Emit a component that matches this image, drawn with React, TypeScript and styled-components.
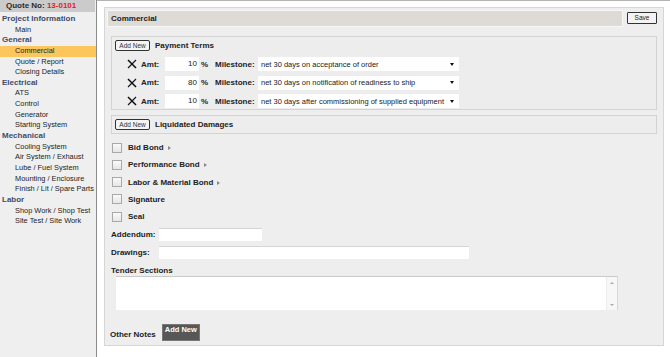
import React from 'react';
import styled, { createGlobalStyle } from 'styled-components';

const GlobalStyle = createGlobalStyle`
  html, body {
    margin: 0;
    padding: 0;
    background: #fff;
    font-family: "Liberation Sans", Arial, sans-serif;
  }
`;

const Page = styled.div`
  display: flex;
  width: 670px;
  height: 357px;
  overflow: hidden;
`;

// SIDEBAR
const Sidebar = styled.nav`
  width: 96px;
  flex: none;
  background: #efefef;
  border-right: 1px solid #8c8c8c;
`;

const QuoteHead = styled.div`
  height: 12px;
  width: 95px;
  background: #cbcbcb;
  font-size: 8px;
  font-weight: bold;
  line-height: 12px;
  color: #2a2a2a;
  padding-left: 6px;
  box-sizing: border-box;
  margin-bottom: 2px;
  span {
    color: #e3201e;
  }
`;

const NavGroup = styled.div`
  height: 10.65px;
  line-height: 10.65px;
  padding-left: 2px;
  font-size: 8px;
  font-weight: bold;
  color: #3f4c69;
  white-space: nowrap;
`;

const NavItem = styled.div<{ $active?: boolean }>`
  height: 10.65px;
  line-height: 10.65px;
  padding-left: 15px;
  font-size: 7.4px;
  color: #232323;
  white-space: nowrap;
  background: ${(p) => (p.$active ? '#fdc65d' : 'transparent')};
`;

// MAIN
const Main = styled.main`
  flex: 1;
  border-top: 1px solid #b4b4b4;
  padding: 6px 6px 0 7px;
`;

const Panel = styled.section`
  height: 339px;
  box-sizing: border-box;
  background: #eeeeee;
  border: 1px solid #d6d6d6;
  padding: 2px 6px 0 6px;
  display: flex;
  flex-direction: column;
`;

const HeaderRow = styled.div`
  display: flex;
  align-items: flex-start;
  gap: 4px;
  margin-left: -4px;
`;

const HeaderBar = styled.div`
  flex: 1;
  height: 17px;
  box-sizing: border-box;
  background: #dedbd6;
  border: 1px solid #f7f7f7;
  font-size: 8px;
  font-weight: bold;
  color: #222;
  line-height: 15px;
  padding-left: 3px;
`;

const SaveButton = styled.button`
  width: 30px;
  height: 12px;
  margin-top: 2px;
  padding: 0;
  background: #f3f3f3;
  border: 1px solid #333;
  border-radius: 1px;
  font-family: inherit;
  font-size: 6.5px;
  color: #222;
  line-height: 10px;
`;

const Box = styled.div<{ $h: number; $mt: number }>`
  height: ${(p) => p.$h}px;
  margin-top: ${(p) => p.$mt}px;
  box-sizing: border-box;
  border: 1px solid #d3d3d3;
  background: #ededed;
  padding: 3px 3px 0 3px;
`;

const BoxTitle = styled.div`
  display: flex;
  align-items: center;
  gap: 5px;
  font-size: 8px;
  font-weight: bold;
  color: #222;
`;

const SmallButton = styled.button`
  width: 35px;
  height: 11px;
  padding: 0;
  background: #f4f4f4;
  border: 1px solid #333;
  border-radius: 2px;
  font-family: inherit;
  font-size: 6.5px;
  color: #333;
  line-height: 9px;
`;

const TermRows = styled.div`
  display: flex;
  flex-direction: column;
  gap: 4.6px;
  margin-top: 6px;
  padding-left: 12px;
`;

const TermRow = styled.div`
  display: flex;
  align-items: center;
  height: 14px;
  font-size: 8px;
`;

const Label = styled.span<{ $w?: number }>`
  font-weight: bold;
  color: #222;
  font-size: 8px;
  display: inline-block;
  width: ${(p) => (p.$w ? `${p.$w}px` : 'auto')};
  white-space: nowrap;
`;

const AmtInput = styled.div`
  width: 34px;
  height: 14px;
  background: #fff;
  text-align: right;
  padding-right: 2px;
  box-sizing: border-box;
  line-height: 14px;
  color: #222;
`;

const Pct = styled.span`
  width: 16px;
  padding-left: 2px;
  box-sizing: border-box;
  color: #222;
  font-weight: bold;
`;

const Select = styled.div`
  width: 201px;
  height: 14px;
  background: #fff;
  display: flex;
  align-items: center;
  justify-content: space-between;
  padding: 0 5px 0 3px;
  box-sizing: border-box;
  color: #222;
  font-size: 7.5px;
  white-space: nowrap;
`;

const Caret = styled.span`
  width: 0;
  height: 0;
  border-left: 2.5px solid transparent;
  border-right: 2.5px solid transparent;
  border-top: 3px solid #111;
`;

const Checks = styled.div`
  display: flex;
  flex-direction: column;
  margin-top: 5px;
`;

const CheckRow = styled.div`
  display: flex;
  align-items: center;
  height: 17.25px;
  padding-left: 1px;
  gap: 6px;
`;

const CheckBox = styled.span`
  width: 8px;
  height: 8px;
  border: 1px solid #a9a9a9;
  background: linear-gradient(#fafafa, #e6e6e6);
`;

const Arrow = styled.span`
  display: inline-block;
  margin-left: 4px;
  width: 0;
  height: 0;
  border-top: 2.5px solid transparent;
  border-bottom: 2.5px solid transparent;
  border-left: 3px solid #888;
`;

const FieldRow = styled.div<{ $mt: number }>`
  display: flex;
  align-items: center;
  margin-top: ${(p) => p.$mt}px;
`;

const TextInput = styled.div<{ $w: number }>`
  width: ${(p) => p.$w}px;
  height: 13px;
  background: #fff;
  border-top: 1px solid #d4d4d4;
  box-sizing: border-box;
`;

const TextArea = styled.div`
  width: 502px;
  height: 34px;
  margin: 1px 0 0 5px;
  background: #fff;
  border-top: 1px solid #c9c9c9;
  border-right: 1px solid #d8d8d8;
  box-sizing: border-box;
  display: flex;
  justify-content: flex-end;
`;

const ScrollTrack = styled.div`
  width: 11px;
  background: #f7f7f7;
  border-left: 1px solid #ececec;
  display: flex;
  flex-direction: column;
  justify-content: space-between;
  align-items: center;
  padding: 5px 0 4px;
  box-sizing: border-box;
`;

const ScrollArrow = styled.span<{ $up?: boolean }>`
  width: 0;
  height: 0;
  border-left: 2px solid transparent;
  border-right: 2px solid transparent;
  ${(p) => (p.$up ? 'border-bottom: 2px solid #aaa;' : 'border-top: 2px solid #aaa;')}
`;

const NotesRow = styled.div`
  display: flex;
  align-items: flex-end;
  gap: 6px;
  margin: 14px 0 0 -1px;
  ${Label} {
    margin-bottom: 2px;
  }
`;

const DarkButton = styled.button`
  width: 38px;
  height: 17px;
  padding: 1px 0 0;
  background: #575757;
  border: 1px solid #777;
  font-family: inherit;
  font-size: 7.5px;
  font-weight: bold;
  color: #fff;
  line-height: 8px;
  display: flex;
  justify-content: center;
  align-items: flex-start;
`;

const RemoveIcon = () => (
  <svg width="10" height="10" viewBox="0 0 10 10" style={{ marginRight: 4 }}>
    <path d="M1 1 L9 9" stroke="#111" strokeWidth="1.6" />
    <path d="M9 1 L1 9" stroke="#111" strokeWidth="1.1" />
  </svg>
);

const nav: { group: string; items: string[] }[] = [
  { group: 'Project Information', items: ['Main'] },
  { group: 'General', items: ['Commercial', 'Quote / Report', 'Closing Details'] },
  { group: 'Electrical', items: ['ATS', 'Control', 'Generator', 'Starting System'] },
  {
    group: 'Mechanical',
    items: [
      'Cooling System',
      'Air System / Exhaust',
      'Lube / Fuel System',
      'Mounting / Enclosure',
      'Finish / Lit / Spare Parts',
    ],
  },
  { group: 'Labor', items: ['Shop Work / Shop Test', 'Site Test / Site Work'] },
];

const terms = [
  { amt: 10, text: 'net 30 days on acceptance of order' },
  { amt: 80, text: 'net 30 days on notification of readiness to ship' },
  { amt: 10, text: 'net 30 days after commissioning of supplied equipment' },
];

const checks = [
  { label: 'Bid Bond', more: true },
  { label: 'Performance Bond', more: true },
  { label: 'Labor & Material Bond', more: true },
  { label: 'Signature' },
  { label: 'Seal' },
];

export default function App() {
  return (
    <>
      <GlobalStyle />
      <Page>
        <Sidebar>
          <QuoteHead>
            Quote No: <span>13-0101</span>
          </QuoteHead>
          {nav.map((g) => (
            <React.Fragment key={g.group}>
              <NavGroup>{g.group}</NavGroup>
              {g.items.map((i) => (
                <NavItem key={i} $active={i === 'Commercial'}>
                  {i}
                </NavItem>
              ))}
            </React.Fragment>
          ))}
        </Sidebar>
        <Main>
          <Panel>
            <HeaderRow>
              <HeaderBar>Commercial</HeaderBar>
              <SaveButton>Save</SaveButton>
            </HeaderRow>

            <Box $h={74} $mt={9}>
              <BoxTitle>
                <SmallButton>Add New</SmallButton>
                Payment Terms
              </BoxTitle>
              <TermRows>
                {terms.map((t, i) => (
                  <TermRow key={i}>
                    <RemoveIcon />
                    <Label $w={24}>Amt:</Label>
                    <AmtInput>{t.amt}</AmtInput>
                    <Pct>%</Pct>
                    <Label $w={43}>Milestone:</Label>
                    <Select>
                      {t.text}
                      <Caret />
                    </Select>
                  </TermRow>
                ))}
              </TermRows>
            </Box>

            <Box $h={19} $mt={5}>
              <BoxTitle>
                <SmallButton>Add New</SmallButton>
                Liquidated Damages
              </BoxTitle>
            </Box>

            <Checks>
              {checks.map((c) => (
                <CheckRow key={c.label}>
                  <CheckBox />
                  <Label>
                    {c.label}
                    {c.more && <Arrow />}
                  </Label>
                </CheckRow>
              ))}
            </Checks>

            <FieldRow $mt={3}>
              <Label $w={48}>Addendum:</Label>
              <TextInput $w={103} />
            </FieldRow>
            <FieldRow $mt={5}>
              <Label $w={48}>Drawings:</Label>
              <TextInput $w={310} />
            </FieldRow>
            <FieldRow $mt={7}>
              <Label>Tender Sections</Label>
            </FieldRow>
            <TextArea>
              <ScrollTrack>
                <ScrollArrow $up />
                <ScrollArrow />
              </ScrollTrack>
            </TextArea>

            <NotesRow>
              <Label>Other Notes</Label>
              <DarkButton>Add New</DarkButton>
            </NotesRow>
          </Panel>
        </Main>
      </Page>
    </>
  );
}
